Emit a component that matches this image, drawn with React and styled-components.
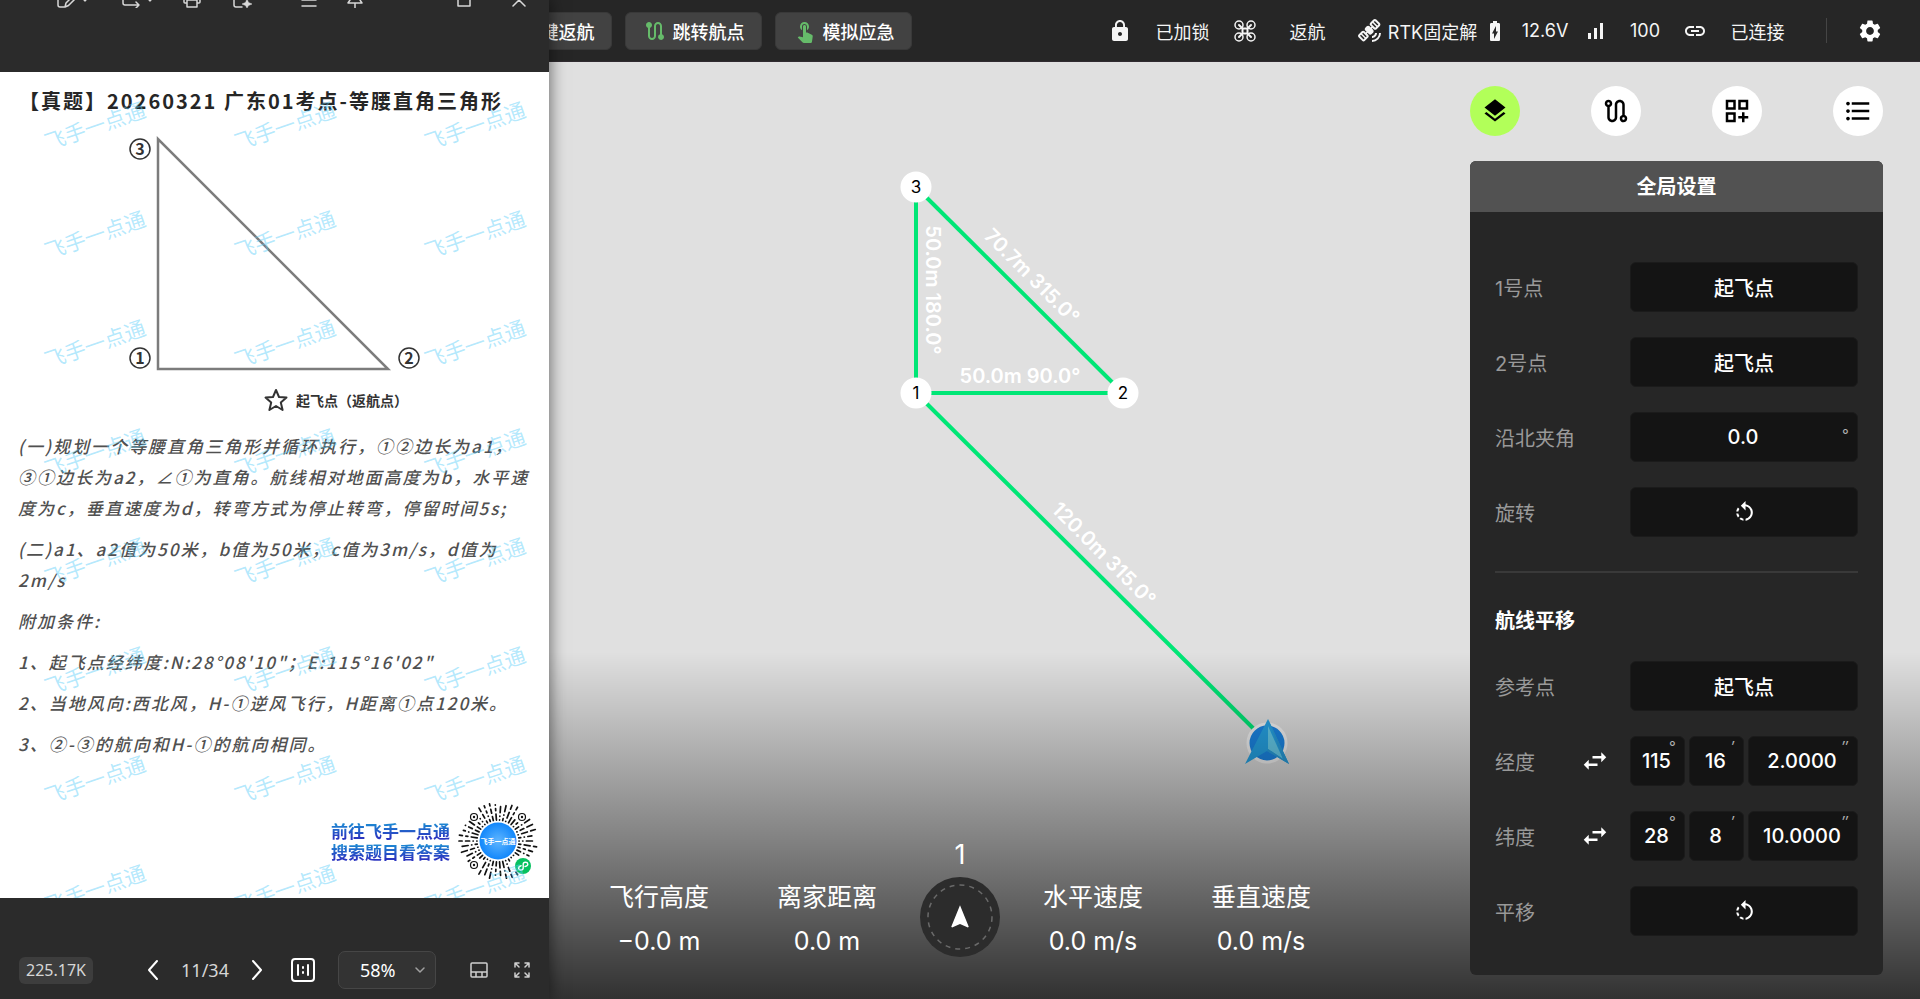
import React from 'react'
import styled, { createGlobalStyle } from 'styled-components'
import {
    MdBatteryChargingFull,
    MdFormatListBulleted,
    MdHome,
    MdLayers,
    MdLink,
    MdLock,
    MdNavigation,
    MdOutlineDashboardCustomize,
    MdOutlineRoute,
    MdRotateLeft,
    MdRoute,
    MdSatelliteAlt,
    MdSettings,
    MdSignalCellularAlt,
    MdSwapHoriz,
    MdTouchApp,
} from 'react-icons/md'

const GlobalStyle = createGlobalStyle`
    *{
        box-sizing:border-box;
    }
    body{
        margin:0;
        background-color:#e0e0e0;
        font-family:Inter, "Noto Sans CJK SC", sans-serif;
    }
    button, input, select{
        font-family:inherit;
    }
    button{
        cursor:pointer;
    }`

const Page = styled.div`
    position:relative;
    display:flex;
    flex-direction:column;
    min-height:100vh;
    overflow:hidden;`

// ---------- top bar ----------

const TopBar = styled.header`
    display:flex;
    align-items:center;
    height:62px;
    padding:0 37px 0 475px;
    background-color:#262626;
    border-bottom:1px solid #302b30;`

const Actions = styled.div`
    display:flex;
    gap:13px;`

const ActionButton = styled.button`
    display:flex;
    align-items:center;
    justify-content:center;
    gap:6px;
    width:137px;
    height:38px;
    padding:0;
    border:1px solid #393939;
    border-radius:6px;
    background-color:#424242;
    color:#ffffff;
    font-size:18px;
    font-weight:500;
    white-space:nowrap;
    svg{
        color:#66bb6a;
        flex-shrink:0;
    }`

const StatusList = styled.div`
    display:flex;
    align-items:center;
    margin-left:auto;`

const Status = styled.div`
    display:flex;
    align-items:center;
    width:${props => (props.$narrow ? '100px' : '125px')};
    color:#f5f5f5;
    font-size:18px;
    white-space:nowrap;
    svg{
        flex-shrink:0;
    }
    span{
        flex:1;
        text-align:center;
    }`

const BarDivider = styled.div`
    width:1px;
    height:25px;
    margin:0 30px 0 18px;
    background-color:#454545;`

const SettingsButton = styled.button`
    display:flex;
    padding:0;
    border:none;
    background:none;
    color:#ffffff;`

// ---------- map ----------

const Main = styled.main`
    position:relative;
    display:flex;
    flex:1;
    padding:24px 37px;
    background-color:#e0e0e0;`

const MapCanvas = styled.svg`
    position:absolute;
    top:0;
    left:0;
    width:100%;
    height:100%;
    .leg{
        stroke:#00e676;
        stroke-width:4;
    }
    .legLabel{
        fill:#ffffff;
        font-size:20px;
        font-weight:600;
        text-anchor:middle;
    }
    .nodeLabel{
        fill:#000000;
        font-size:17px;
        text-anchor:middle;
    }`

const Hud = styled.div`
    position:absolute;
    left:0;
    right:0;
    bottom:0;
    height:37%;
    display:flex;
    align-items:flex-end;
    justify-content:center;
    padding-bottom:36px;
    background:linear-gradient(rgba(0,0,0,0), rgba(0,0,0,0.78));
    color:#ffffff;`

const Reading = styled.div`
    width:168px;
    font-size:25px;
    line-height:44px;
    text-align:center;
    white-space:nowrap;`

const CompassBox = styled.div`
    display:flex;
    flex-direction:column;
    align-items:center;
    width:98px;
    padding-bottom:6px;
    font-size:27px;
    line-height:44px;`

const Compass = styled.div`
    display:grid;
    place-items:center;
    width:80px;
    height:80px;
    border-radius:50%;
    background-color:#2c2c2c;
    svg{
        grid-area:1 / 1;
    }`

// ---------- side panel ----------

const Side = styled.aside`
    position:relative;
    display:flex;
    flex-direction:column;
    gap:25px;
    width:413px;
    margin-left:auto;`

const RoundButtons = styled.div`
    display:flex;
    justify-content:space-between;`

const RoundButton = styled.button`
    display:grid;
    place-items:center;
    width:50px;
    height:50px;
    padding:0;
    border:none;
    border-radius:50%;
    background-color:${props => (props.$active ? '#b2ff59' : '#ffffff')};
    color:#000000;`

const Panel = styled.section`
    overflow:hidden;
    border-radius:6px;
    background-color:#262626;`

const PanelHeader = styled.h2`
    margin:0;
    padding-top:2px;
    background-color:#525252;
    color:#ffffff;
    font-size:20px;
    font-weight:700;
    line-height:49px;
    text-align:center;`

const PanelBody = styled.div`
    display:flex;
    flex-direction:column;
    gap:25px;
    padding:50px 25px 39px;`

const Row = styled.div`
    display:flex;
    align-items:center;
    height:50px;`

const RowLabel = styled.label`
    flex:1;
    color:#999999;
    font-size:20px;`

const Controls = styled.div`
    display:flex;
    gap:4px;
    width:228px;`

const PanelButton = styled.button`
    display:grid;
    place-items:center;
    width:100%;
    height:50px;
    border:1px solid #1b1b1b;
    border-radius:6px;
    background-color:#141414;
    color:#ffffff;
    font-size:20px;
    font-weight:500;`

const SwapButton = styled.button`
    display:flex;
    margin-right:20px;
    padding:0;
    border:none;
    background:none;
    color:#ffffff;`

const FieldBox = styled.div`
    position:relative;
    flex:${props => props.$grow || 1} 1 0;`

const FieldInput = styled.input`
    width:100%;
    height:50px;
    padding:0 2px 0 0;
    border:1px solid #1b1b1b;
    border-radius:6px;
    background-color:#141414;
    color:#ffffff;
    font-size:20px;
    font-weight:500;
    text-align:center;
    outline:none;`

const Unit = styled.span`
    position:absolute;
    top:${props => (props.$low ? '15px' : '3px')};
    right:10px;
    color:#b0b0b0;
    font-size:15px;
    line-height:16px;
    font-style:italic;`

const PanelRule = styled.hr`
    width:100%;
    height:2px;
    margin:9px 0 8px;
    border:none;
    background-color:#393939;`

const PanelTitle = styled.h3`
    margin:0;
    color:#ffffff;
    font-size:20px;
    font-weight:700;
    line-height:30px;`

// ---------- document viewer window ----------

const Viewer = styled.section`
    position:absolute;
    top:0;
    bottom:0;
    left:0;
    display:flex;
    flex-direction:column;
    width:549px;
    overflow:hidden;
    background-color:#2b2b2b;`

const ViewerShadow = styled.div`
    position:absolute;
    top:0;
    bottom:0;
    left:0;
    width:549px;
    box-shadow:0 0 16px rgba(0,0,0,0.6);`

const ViewerBar = styled.div`
    display:flex;
    height:84px;
    margin-top:-12px;
    padding-left:56px;`

const ToolButton = styled.button`
    width:${props => (props.$small ? '14px' : '20px')};
    height:20px;
    margin:0 0 0 ${props => props.$gap || 0}px;
    padding:0;
    border:none;
    background:none;
    color:#d8d8d8;
    svg{
        display:block;
    }`

const Sheet = styled.article`
    position:relative;
    display:flex;
    flex-direction:column;
    flex:1;
    overflow:hidden;
    background-color:#ffffff;
    font-family:"Noto Sans CJK SC", sans-serif;`

const SheetTitle = styled.h1`
    margin:14px 0 0;
    padding-left:19px;
    color:#262626;
    font-size:20px;
    font-weight:700;
    line-height:30px;
    letter-spacing:2px;
    white-space:nowrap;`

const Figure = styled.figure`
    margin:0;
    svg{
        display:block;
    }`

const Caption = styled.figcaption`
    display:flex;
    align-items:center;
    gap:8px;
    padding-left:264px;
    color:#333333;
    font-size:14px;
    font-weight:700;
    line-height:24px;`

const Question = styled.div`
    display:flex;
    flex-direction:column;
    gap:10px;
    padding:18px 0 0 18px;
    color:#505050;
    font-size:17px;
    font-weight:500;
    font-style:italic;
    line-height:31px;
    letter-spacing:2px;
    white-space:nowrap;
    p{
        margin:0;
    }`

const Promo = styled.div`
    display:flex;
    align-items:center;
    justify-content:flex-end;
    gap:6px;
    margin-top:auto;
    padding:0 9px 15px 0;`

const PromoLine = styled.div`
    background:linear-gradient(#1d86d2 20%, #2b35c0 85%);
    background-clip:text;
    color:transparent;
    font-size:17px;
    font-weight:700;
    line-height:21px;`

const Watermarks = styled.div`
    position:absolute;
    inset:-2px auto auto -1px;
    display:grid;
    grid-template-columns:repeat(3, 190px);
    grid-auto-rows:109px;
    place-items:center;
    pointer-events:none;
    color:rgba(90,205,250,0.45);
    font-size:21px;
    line-height:24px;
    span{
        transform:rotate(-19deg);
    }`

const ViewerFooter = styled.footer`
    display:flex;
    align-items:center;
    height:101px;
    padding:43px 18px 0 19px;
    color:#d6d6d6;
    font-family:"Noto Sans", sans-serif;`

const SizeBadge = styled.span`
    width:74px;
    margin-right:52px;
    border-radius:6px;
    background-color:#3d3d3d;
    font-size:16px;
    line-height:27px;
    text-align:center;`

const FooterButton = styled.button`
    display:flex;
    margin-left:${props => props.$gap || 0}px;
    padding:0;
    border:none;
    background:none;
    color:${props => (props.$dim ? '#d0d0d0' : '#ffffff')};`

const PageCount = styled.span`
    width:80px;
    padding-left:8px;
    font-size:18px;
    text-align:center;`

const ZoomBox = styled.div`
    position:relative;
    width:98px;
    margin-left:23px;
    svg{
        position:absolute;
        top:14px;
        right:10px;
        color:#a0a0a0;
        pointer-events:none;
    }`

const ZoomSelect = styled.select`
    display:block;
    width:100%;
    height:38px;
    padding:0 0 0 21px;
    border:1px solid #464646;
    border-radius:7px;
    background-color:#333333;
    color:#ffffff;
    font-size:18px;
    appearance:none;`

const Stroke = ({ width = 20, height = 20, box, weight = 1.5, children }) => (
    <svg
        width={width}
        height={height}
        viewBox={box || `0 0 ${width} ${height}`}
        fill="none"
        stroke="currentColor"
        strokeWidth={weight}
        strokeLinecap="round"
        strokeLinejoin="round"
        aria-hidden="true"
    >
        {children}
    </svg>
)

const QuadcopterIcon = () => (
    <Stroke width={24} height={24} weight={1.5}>
        <circle cx="6" cy="6" r="4" />
        <circle cx="18" cy="6" r="4" />
        <circle cx="6" cy="18" r="4" />
        <circle cx="18" cy="18" r="4" />
        <path d="M6 6l3.500 3.500h5L18 6M6 18l3.500-3.500h5L18 18M9.500 9.500v5M14.500 9.500v5" strokeWidth="2" />
    </Stroke>
)

// rays of the round mini-program code, leaving room for the three eyes and the badge
const EYES = [[-24, -24], [24, -24], [-24, 24]]
const RAYS = []
for (let i = 0; i < 42; i++) {
    const angle = (i * Math.PI * 2) / 42
    let r = 21
    let seed = (i * 37 + 11) % 53
    while (r < 37) {
        seed = (seed * 29 + 17) % 101
        const len = [0.2, 2, 4, 0.2, 6][seed % 5]
        const end = Math.min(r + len, 39)
        const x = Math.cos(angle) * end
        const y = Math.sin(angle) * end
        const blocked = EYES.some(([ex, ey]) => Math.hypot(x - ex, y - ey) < 6)
        if (!blocked && Math.hypot(x - 25, y - 25) > 10) {
            RAYS.push([Math.cos(angle) * r, Math.sin(angle) * r, x, y])
        }
        r = end + 3.5
    }
}

const MiniCode = () => (
    <svg width="84" height="84" viewBox="-42 -42 84 84">
        <g stroke="#111111" strokeWidth="1.7" strokeLinecap="round">
            {RAYS.map((ray, i) => (
                <line key={i} x1={ray[0]} y1={ray[1]} x2={ray[2]} y2={ray[3]} />
            ))}
        </g>
        {EYES.map(([x, y]) => (
            <g key={`${x},${y}`}>
                <circle cx={x} cy={y} r="3.500" fill="#ffffff" stroke="#111111" strokeWidth="1.200" />
                <circle cx={x} cy={y} r="1.200" fill="#111111" />
            </g>
        ))}
        <defs>
            <radialGradient id="codeFill">
                <stop offset="0" stopColor="#5fb6ff" />
                <stop offset="1" stopColor="#1287fb" />
            </radialGradient>
        </defs>
        <circle r="18.500" fill="url(#codeFill)" />
        <text y="3" fill="#ffffff" fontSize="7" fontWeight="700" textAnchor="middle">飞手一点通</text>
        <circle cx="25" cy="25" r="8" fill="#07c160" />
        <path
            d="M27 25.500c2-.3 3-1.300 2.800-2.600-.3-2.300-4.600-2.300-4.600.3v3.800c0 2.500-4.300 2.600-4.600.3-.1-1.400.9-2.300 2.500-2.600"
            fill="none"
            stroke="#ffffff"
            strokeWidth="1.400"
            strokeLinecap="round"
        />
    </svg>
)

const NODES = [
    { name: '3', x: 916, y: 125 },
    { name: '1', x: 916, y: 331 },
    { name: '2', x: 1123, y: 331 },
]

const FlightMap = () => (
    <MapCanvas role="img" aria-label="航线地图">
        <line className="leg" x1="916" y1="125" x2="916" y2="331" />
        <line className="leg" x1="916" y1="331" x2="1123" y2="331" />
        <line className="leg" x1="916" y1="125" x2="1123" y2="331" />
        <line className="leg" x1="916" y1="331" x2="1267" y2="680" />
        <text className="legLabel" x="1020" y="321">50.0m 90.0°</text>
        <text className="legLabel" transform="translate(926 228) rotate(90)">50.0m 180.0°</text>
        <text className="legLabel" transform="translate(1027 219) rotate(45)">70.7m 315.0°</text>
        <text className="legLabel" transform="translate(1099 497) rotate(45)">120.0m 315.0°</text>
        {NODES.map(node => (
            <g key={node.name}>
                <circle cx={node.x} cy={node.y} r="15.500" fill="#ffffff" />
                <text className="nodeLabel" x={node.x} y={node.y + 6}>{node.name}</text>
            </g>
        ))}
        <g transform="translate(1267 681)">
            <circle r="19" fill="#1b87e6" stroke="#f5f5f5" strokeWidth="3" />
            <path d="M1-24L22 21 0 8-22 21z" fill="#26a4e6" />
            <path d="M1-17L16 16 1 6z" fill="#66cdec" />
            <path d="M0 8l22 13L1-24l15 40L1 6z" fill="#2a9ddb" />
        </g>
    </MapCanvas>
)

const Field = ({ id, label, value, unit, grow, low }) => (
    <FieldBox $grow={grow}>
        <FieldInput id={id} aria-label={label} defaultValue={value} />
        <Unit $low={low}>{unit}</Unit>
    </FieldBox>
)

const PickRow = ({ id, label, children }) => (
    <Row>
        <RowLabel htmlFor={id}>{label}</RowLabel>
        <Controls>
            <PanelButton id={id}>{children}</PanelButton>
        </Controls>
    </Row>
)

const CoordinateRow = ({ id, label, degrees, minutes, seconds }) => (
    <Row>
        <RowLabel htmlFor={id}>{label}</RowLabel>
        <SwapButton aria-label={`${label}换向`}>
            <MdSwapHoriz size={30} />
        </SwapButton>
        <Controls>
            <Field id={id} value={degrees} unit="°" grow={1} />
            <Field label={`${label}分`} value={minutes} unit="′" grow={1} />
            <Field label={`${label}秒`} value={seconds} unit="″" grow={2} />
        </Controls>
    </Row>
)

const DocumentViewer = () => (
    <>
        <ViewerShadow />
        <Viewer>
            <ViewerBar>
                <ToolButton aria-label="编辑">
                    <Stroke><path d="M2 4v13a2 2 0 0 0 2 2h4M9 19l1-4 7-7 2.500 2.500-7 7z" /></Stroke>
                </ToolButton>
                <ToolButton $small $gap={2} aria-label="编辑选项">
                    <Stroke width={14} weight={1.2}><path d="M5 11l2 2 2-2" /></Stroke>
                </ToolButton>
                <ToolButton $gap={29} aria-label="转换">
                    <Stroke><path d="M2 12v3a2 2 0 0 0 2 2h14M15 14l3 3-3 3" /></Stroke>
                </ToolButton>
                <ToolButton $small $gap={2} aria-label="转换选项">
                    <Stroke width={14} weight={1.2}><path d="M5 11l2 2 2-2" /></Stroke>
                </ToolButton>
                <ToolButton $gap={25} aria-label="打印">
                    <Stroke><path d="M5 15H3a1 1 0 0 1-1-1V8h16v6a1 1 0 0 1-1 1h-2M5 12h10v7H5z" /></Stroke>
                </ToolButton>
                <ToolButton $gap={30} aria-label="新建">
                    <Stroke>
                        <path d="M2 5v12a2 2 0 0 0 2 2h6" />
                        <path d="M15 11l1.500 3.500L20 16l-3.500 1.500L15 20l-1.500-2.500L10 16l3.500-1.500z" fill="currentColor" strokeWidth="0.500" />
                    </Stroke>
                </ToolButton>
                <ToolButton $gap={47} aria-label="菜单">
                    <Stroke><path d="M3 12h14M3 18h14" /></Stroke>
                </ToolButton>
                <ToolButton $gap={26} aria-label="置顶">
                    <Stroke><path d="M5 8v4l-2 3h14l-2-3V8M10 15v5" /></Stroke>
                </ToolButton>
                <ToolButton $gap={89} aria-label="最大化">
                    <Stroke><rect x="4" y="6" width="12" height="12" /></Stroke>
                </ToolButton>
                <ToolButton $gap={35} aria-label="关闭">
                    <Stroke><path d="M4 6l12 12M16 6L4 18" /></Stroke>
                </ToolButton>
            </ViewerBar>
            <Sheet>
                <SheetTitle>【真题】20260321 广东01考点-等腰直角三角形</SheetTitle>
                <Figure>
                    <svg width="549" height="272" viewBox="0 0 549 272">
                        <path d="M158 23V253H388z" fill="none" stroke="#7c7c7c" strokeWidth="2.500" />
                        <g fill="none" stroke="#333333" strokeWidth="1.500">
                            <circle cx="140" cy="33" r="10" />
                            <circle cx="140" cy="242" r="10" />
                            <circle cx="409" cy="242" r="10" />
                        </g>
                        <g fill="#333333" fontSize="16" fontWeight="700" textAnchor="middle">
                            <text x="140" y="39">3</text>
                            <text x="140" y="248">1</text>
                            <text x="409" y="248">2</text>
                        </g>
                    </svg>
                    <Caption>
                        <Stroke width={24} height={24} weight={2}>
                            <path d="M12 2l3 7 7.500.6-5.700 5 1.800 7.400L12 18l-6.600 4 1.800-7.400-5.700-5L9 9z" />
                        </Stroke>
                        起飞点（返航点）
                    </Caption>
                </Figure>
                <Question>
                    <p>
                        (一)规划一个等腰直角三角形并循环执行，①②边长为a1，<br />
                        ③①边长为a2，∠①为直角。航线相对地面高度为b，水平速<br />
                        度为c，垂直速度为d，转弯方式为停止转弯，停留时间5s;
                    </p>
                    <p>
                        (二)a1、a2值为50米，b值为50米，c值为3m/s，d值为<br />
                        2m/s
                    </p>
                    <p>附加条件:</p>
                    <p>1、起飞点经纬度:N:28°08'10"；E:115°16'02"</p>
                    <p>2、当地风向:西北风，H-①逆风飞行，H距离①点120米。</p>
                    <p>3、②-③的航向和H-①的航向相同。</p>
                </Question>
                <Promo>
                    <div>
                        <PromoLine>前往飞手一点通</PromoLine>
                        <PromoLine>搜索题目看答案</PromoLine>
                    </div>
                    <MiniCode />
                </Promo>
                <Watermarks aria-hidden="true">
                    {Array.from({ length: 24 }, (_, i) => <span key={i}>飞手一点通</span>)}
                </Watermarks>
            </Sheet>
            <ViewerFooter>
                <SizeBadge>225.17K</SizeBadge>
                <FooterButton aria-label="上一张">
                    <Stroke width={16} height={22} weight={2}><path d="M12 2L4 11l8 9" /></Stroke>
                </FooterButton>
                <PageCount>11/34</PageCount>
                <FooterButton $gap={8} aria-label="下一张">
                    <Stroke width={16} height={22} weight={2}><path d="M4 2l8 9-8 9" /></Stroke>
                </FooterButton>
                <FooterButton $gap={26} aria-label="原始大小">
                    <Stroke width={24} height={24} weight={2}>
                        <rect x="1" y="1" width="22" height="22" rx="3" />
                        <path d="M7 7v10M17 7v10M12 9v1M12 14v1" />
                    </Stroke>
                </FooterButton>
                <ZoomBox>
                    <ZoomSelect aria-label="缩放" defaultValue="58%">
                        <option>58%</option>
                        <option>100%</option>
                    </ZoomSelect>
                    <Stroke width={12} height={10} weight={1.5}><path d="M2 3l4 4 4-4" /></Stroke>
                </ZoomBox>
                <FooterButton $dim $gap={34} aria-label="缩略图">
                    <Stroke width={18} height={18} weight={1.5}>
                        <path d="M2 2h14a1 1 0 0 1 1 1v12a1 1 0 0 1-1 1H2a1 1 0 0 1-1-1V3a1 1 0 0 1 1-1zM1 11h16M6 11v5M12 11v5" />
                    </Stroke>
                </FooterButton>
                <FooterButton $dim $gap={25} aria-label="全屏">
                    <Stroke width={18} height={18} weight={1.5}>
                        <path d="M2 6V2h4M2 2l4 4M12 2h4v4M16 2l-4 4M2 12v4h4M2 16l4-4M16 12v4h-4M16 16l-4-4" />
                    </Stroke>
                </FooterButton>
            </ViewerFooter>
        </Viewer>
    </>
)

export default class App extends React.Component{
    render(){
        return(
            <Page>
                <GlobalStyle/>
                <TopBar>
                    <Actions>
                        <ActionButton><MdHome size={24}/>一键返航</ActionButton>
                        <ActionButton><MdRoute size={24}/>跳转航点</ActionButton>
                        <ActionButton><MdTouchApp size={24}/>模拟应急</ActionButton>
                    </Actions>
                    <StatusList>
                        <Status><MdLock size={24}/><span>已加锁</span></Status>
                        <Status><QuadcopterIcon/><span>返航</span></Status>
                        <Status><MdSatelliteAlt size={24}/><span>RTK固定解</span></Status>
                        <Status $narrow><MdBatteryChargingFull size={24}/><span>12.6V</span></Status>
                        <Status $narrow><MdSignalCellularAlt size={24}/><span>100</span></Status>
                        <Status><MdLink size={24}/><span>已连接</span></Status>
                    </StatusList>
                    <BarDivider/>
                    <SettingsButton aria-label="设置"><MdSettings size={26}/></SettingsButton>
                </TopBar>
                <Main>
                    <FlightMap/>
                    <Hud>
                        <Reading>飞行高度<br/>−0.0 m</Reading>
                        <Reading>离家距离<br/>0.0 m</Reading>
                        <CompassBox>
                            1
                            <Compass>
                                <svg width="66" height="66" viewBox="-33 -33 66 66">
                                    <circle r="32" fill="none" stroke="#6a6a6a" strokeWidth="1.5" strokeDasharray="5 5"/>
                                </svg>
                                <MdNavigation size={28}/>
                            </Compass>
                        </CompassBox>
                        <Reading>水平速度<br/>0.0 m/s</Reading>
                        <Reading>垂直速度<br/>0.0 m/s</Reading>
                    </Hud>
                    <Side>
                        <RoundButtons>
                            <RoundButton $active aria-label="图层"><MdLayers size={28}/></RoundButton>
                            <RoundButton aria-label="航线"><MdOutlineRoute size={30}/></RoundButton>
                            <RoundButton aria-label="组件"><MdOutlineDashboardCustomize size={30}/></RoundButton>
                            <RoundButton aria-label="列表"><MdFormatListBulleted size={30}/></RoundButton>
                        </RoundButtons>
                        <Panel>
                            <PanelHeader>全局设置</PanelHeader>
                            <PanelBody>
                                <PickRow id="point1" label="1号点">起飞点</PickRow>
                                <PickRow id="point2" label="2号点">起飞点</PickRow>
                                <Row>
                                    <RowLabel htmlFor="north">沿北夹角</RowLabel>
                                    <Controls>
                                        <Field id="north" value="0.0" unit="°" low/>
                                    </Controls>
                                </Row>
                                <PickRow id="rotate" label="旋转"><MdRotateLeft size={25}/></PickRow>
                                <PanelRule/>
                                <PanelTitle>航线平移</PanelTitle>
                                <PickRow id="reference" label="参考点">起飞点</PickRow>
                                <CoordinateRow id="lng" label="经度" degrees="115" minutes="16" seconds="2.0000"/>
                                <CoordinateRow id="lat" label="纬度" degrees="28" minutes="8" seconds="10.0000"/>
                                <PickRow id="move" label="平移"><MdRotateLeft size={25}/></PickRow>
                            </PanelBody>
                        </Panel>
                    </Side>
                </Main>
                <DocumentViewer/>
            </Page>
        )
    }
}
